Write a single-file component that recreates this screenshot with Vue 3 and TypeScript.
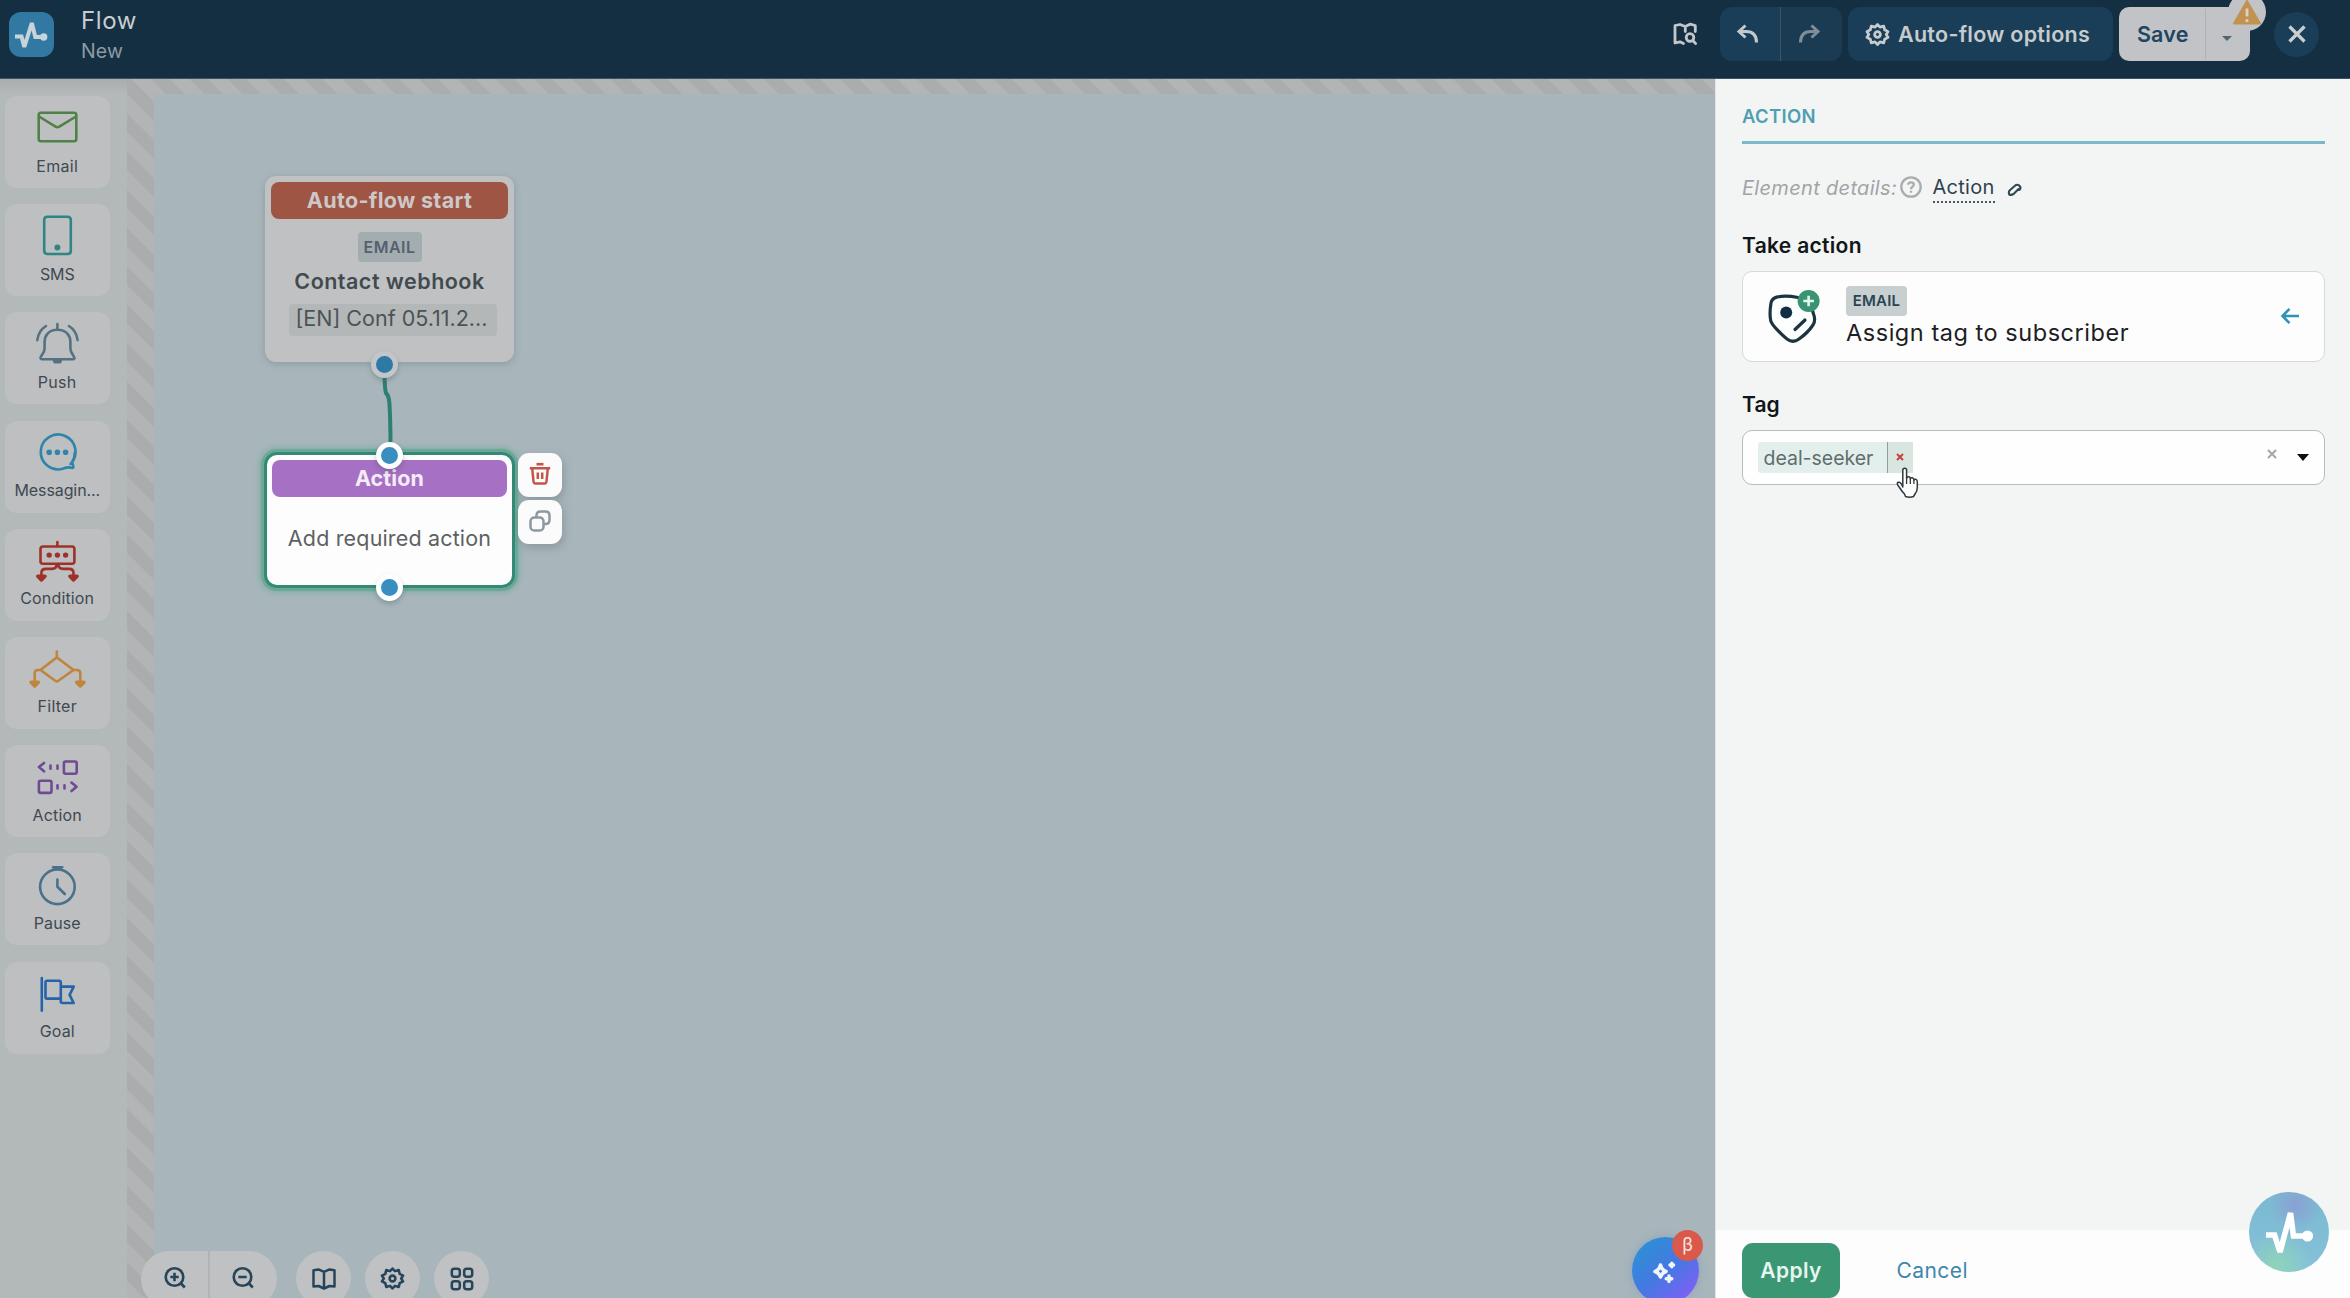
<script setup lang="ts">
interface Shape {
  d: string
  fill?: boolean
}
interface Tool {
  label: string
  color: string
  spacing: string
  shapes: Shape[]
}

const dot = (x: number, y: number, r: number): string =>
  `M${x - r} ${y}a${r} ${r} 0 1 0 ${2 * r} 0a${r} ${r} 0 1 0 ${-2 * r} 0z`
const arrow = (x: number, y: number): string =>
  `M${x - 5.4} ${y}q0 -1.6 2 -1.6h6.8q2 0 2 1.6q0 1 -1 2l-3.2 3.2q-1.2 1 -2.4 0l-3.2 -3.2q-1 -1 -1 -2z`

const tools: Tool[] = [
  {
    label: 'Email', color: '#4f8248', spacing: '0.3px',
    shapes: [{ d: 'M14 8.7H47Q49.3 8.7 49.3 11V35Q49.3 37.3 47 37.3H14Q11.7 37.3 11.7 35V11Q11.7 8.7 14 8.7z' }, { d: 'M12 12.5L28.5 22.6Q30.4 23.8 32.3 22.6L49 12.5' }],
  },
  {
    label: 'SMS', color: '#2f8583', spacing: '-0.15px',
    shapes: [{ d: 'M20.5 4.7H40.5Q43.8 4.7 43.8 8V38.7Q43.8 42 40.5 42H20.5Q17.2 42 17.2 38.7V8Q17.2 4.7 20.5 4.7z' }, { d: dot(30.4, 35.6, 3), fill: true }],
  },
  {
    label: 'Push', color: '#557282', spacing: '0.3px',
    shapes: [
      { d: 'M30.4 4V9.5M30.4 9.8C22 9.8 17.6 15.5 17.6 22V28.5C17.6 32.8 14.2 35.2 13.6 37.5Q13.2 39.2 15 39.2H46Q47.8 39.2 47.3 37.5C46.6 35.2 43.4 32.8 43.4 28.5V22C43.4 15.500 39 9.8 30.4 9.8zM10.300 20.2C11 14 14 9 19 6M50.600 20.200C49.900 14 46.900 9 41.900 6' },
      { d: 'M25.800 39.500H35V40.500Q35 43.600 32 43.600H28.800Q25.800 43.600 25.800 40.500z', fill: true },
    ],
  },
  {
    label: 'Messagin...', color: '#2f84aa', spacing: '-0.1px',
    shapes: [
      { d: 'M43.5 35.200A17.400 17.400 0 1 0 36.500 39.500Q41 37.600 45.500 38.900Q46.800 38.800 46.300 37.300L45.200 33Q47.900 28.500 47.800 23.500' },
      { d: dot(22.2, 23.2, 2.8) + dot(30.4, 23.2, 2.8) + dot(38.600, 23.2, 2.8), fill: true },
    ],
  },
  {
    label: 'Condition', color: '#9e3229', spacing: '0.15px',
    shapes: [
      { d: 'M30.4 5V9.300M16 9.500H45Q47.400 9.500 47.400 12V24.200Q47.400 26.700 45 26.700H16Q13.500 26.700 13.500 24.200V12Q13.500 9.500 16 9.500zM29.600 27Q29.600 31.900 25 31.900H19Q14.400 31.900 14.400 36V38M31.400 27Q31.400 31.900 36 31.900H42Q46.500 31.900 46.500 36V38' },
      { d: dot(22.2, 18.1, 2.7) + dot(30.4, 18.1, 2.7) + dot(38.6, 18.1, 2.7) + arrow(14.4, 39) + arrow(46.5, 39), fill: true },
    ],
  },
  {
    label: 'Filter', color: '#bf853c', spacing: '0.25px',
    shapes: [
      { d: 'M29.800 6.500V12.500M28.600 13.300Q29.800 12.400 31 13.300L46.500 25L31 36Q29.800 36.900 28.600 36L13.500 25zM13.500 25H11Q7.700 25 7.700 28.300V35M46.500 25H50Q53.300 25 53.300 28.300V35' },
      { d: arrow(7.7, 37) + arrow(53.3, 37), fill: true },
    ],
  },
  {
    label: 'Action', color: '#6f4b93', spacing: '0.2px',
    shapes: [{ d: 'M17 10L12 14.100L17 18.300M23.500 12.500V15.800M30.500 12.500V15.800M38.500 8.500H48Q49.700 8.500 49.700 10.200V19Q49.700 20.700 48 20.700H38.500Q36.900 20.700 36.900 19V10.200Q36.900 8.500 38.500 8.500zM13.500 27.700H22.800Q24.500 27.700 24.500 29.400V38.200Q24.500 39.900 22.800 39.900H13.500Q11.900 39.900 11.900 38.200V29.400Q11.900 27.700 13.500 27.700zM30.500 32.200V35.500M37.500 32.200V35.500M44.500 29.600L49.500 33.800L44.500 38' }],
  },
  {
    label: 'Pause', color: '#49718b', spacing: '0.15px',
    shapes: [{ d: dot(30.4, 25.8, 17.3) + 'M26 6.300H35.300M30.400 18.500V25.800L37.800 33' }],
  },
  {
    label: 'Goal', color: '#2763a8', spacing: '0.1px',
    shapes: [{ d: 'M14.800 8V40.800M20 10.700H32Q33.800 10.700 33.800 12.500V28.600H20Q18.500 28.600 18.500 27V12.500Q18.500 10.700 20 10.700zM33.800 16.600H46.700L42.600 24.800L46.700 33H35.500Q33.800 33 33.800 31.500V28.600' }],
  },
]

const gear =
  'M12 1.600L14.600 4.300L18.500 3.200L19.500 7.100L23 9L21.100 12L23 15L19.500 16.900L18.500 20.800L14.600 19.700L12 22.400L9.400 19.700L5.500 20.800L4.500 16.900L1 15L2.900 12L1 9L4.500 7.100L5.500 3.200L9.400 4.300z'
</script>

<template>
  <div class="app">
    <header class="topbar">
      <div class="logo">
        <svg viewBox="0 0 45 45" width="45" height="45">
          <path d="M6 24.500H12.500L15.300 35L22.800 11L26.300 25H35" fill="none" stroke="#c9d3da" stroke-width="4" stroke-linejoin="miter" stroke-miterlimit="2" />
          <circle cx="34.700" cy="25" r="3.700" fill="#c9d3da" />
        </svg>
      </div>
      <div class="titles">
        <div class="title">Flow</div>
        <div class="subtitle">New</div>
      </div>
      <div class="actions">
        <svg class="guide" viewBox="0 0 24 24" width="24" height="24" fill="none" stroke="#c3c7ca" stroke-width="2.800" stroke-linejoin="round" stroke-linecap="round">
          <path d="M10.500 21.500L7 19.800L2 21V3.500L7 2.500L12.300 4.500L17 2.200L22.300 3.500V9.500M12.300 4.500V9.500" />
          <circle cx="17" cy="15.500" r="3.800" />
          <path d="M20 18.700L22.700 21.600" />
        </svg>
        <div class="history">
          <button class="hbtn" aria-label="undo">
            <svg viewBox="0 0 22 20" width="22" height="20" fill="none" stroke="#c3c9cd" stroke-width="3"><path d="M8.500 1.500L2 7.500L8.500 13.500M2.500 7.500H9Q19.500 7.500 19.500 18.500" /></svg>
          </button>
          <button class="hbtn redo" aria-label="redo">
            <svg viewBox="0 0 22 20" width="22" height="20" fill="none" stroke="#7f8f9a" stroke-width="3"><path d="M13.500 1.500L20 7.500L13.500 13.500M19.500 7.500H13Q2.500 7.500 2.500 18.500" /></svg>
          </button>
        </div>
        <button class="options">
          <svg viewBox="0 0 24 24" width="23" height="23" fill="none" stroke="#c6cbce" stroke-width="2.900" stroke-linejoin="round"><path :d="gear" /><circle cx="12" cy="12" r="3" /></svg>
          <span>Auto-flow options</span>
        </button>
        <div class="save">
          <span class="save-label">Save</span>
          <span class="save-more"><i class="caret"></i></span>
          <span class="warn">
            <svg viewBox="0 0 30 28" width="30" height="28"><path d="M15 3L28 25.500H2z" fill="#c39150" stroke="#c39150" stroke-width="2" stroke-linejoin="round" /><path d="M15 10.500V18.500M15 21.300V24" stroke="#d8d3cc" stroke-width="2.800" /></svg>
          </span>
        </div>
        <button class="close" aria-label="close">
          <svg viewBox="0 0 20 20" width="20" height="20"><path d="M2.500 2.500L17.500 17.500M17.500 2.500L2.500 17.500" stroke="#c9ced1" stroke-width="3.200" /></svg>
        </button>
      </div>
    </header>

    <div class="body">
      <aside class="sidebar">
        <div v-for="t in tools" :key="t.label" class="tool">
          <svg viewBox="0 0 60 44" width="60" height="44" stroke-width="2.600" stroke-linecap="round" stroke-linejoin="round">
            <path v-for="(s, i) in t.shapes" :key="i" :d="s.d" :fill="s.fill ? t.color : 'none'" :stroke="s.fill ? 'none' : t.color" />
          </svg>
          <span :style="{ letterSpacing: t.spacing }">{{ t.label }}</span>
        </div>
      </aside>

      <main class="stage">
        <div class="canvas">
          <svg class="link" viewBox="0 0 20 80" width="20" height="80" fill="none"><path d="M5.500 0Q5.500 20 7 24Q10 27 10.400 34Q11.500 50 11.500 80" stroke="#2d7f73" stroke-width="4" /></svg>

          <section class="node start">
            <div class="node-head red">Auto-flow start</div>
            <span class="badge">EMAIL</span>
            <div class="node-name">Contact webhook</div>
            <div class="node-chip">[EN] Conf 05.11.2...</div>
            <i class="port out-dim"></i>
          </section>

          <section class="node action">
            <div class="node-head purple">Action</div>
            <div class="node-text">Add required action</div>
            <i class="port top"></i>
            <i class="port bottom"></i>
          </section>

          <div class="node-tools">
            <button aria-label="delete">
              <svg viewBox="0 0 22 22" width="22" height="22" fill="none" stroke="#c4534a" stroke-width="2.500" stroke-linejoin="round"><path d="M7.500 1.200H14.500" stroke-width="2.600" /><path d="M.8 5.200H21.200M3.200 5.500L4.500 18.500Q4.700 20.500 6.500 20.500H15.500Q17.300 20.500 17.500 18.500L18.800 5.500M8.800 9.500V16M13.200 9.500V16" /></svg>
            </button>
            <button aria-label="copy">
              <svg viewBox="0 0 22 22" width="22" height="22" fill="none" stroke="#8b9a9f" stroke-width="2.500"><rect x="1.500" y="7.500" width="13" height="13" rx="3.800" /><path d="M7.500 7V5.500Q7.500 1.500 11.500 1.500H16.500Q20.500 1.500 20.500 5.500V10Q20.500 14 16.500 14H15" /></svg>
            </button>
          </div>
        </div>

        <div class="dock">
          <div class="zoom">
            <span>
              <svg viewBox="0 0 22 22" width="22" height="22" fill="none" stroke="#27455a" stroke-width="2.600"><circle cx="10.500" cy="10" r="8.800" /><path d="M17 16.500L20.800 20.500M6.300 10H14.700M10.500 5.800V14.200" /></svg>
            </span>
            <span>
              <svg viewBox="0 0 22 22" width="22" height="22" fill="none" stroke="#27455a" stroke-width="2.600"><circle cx="10.500" cy="10" r="8.800" /><path d="M17 16.500L20.800 20.500M6.300 10H14.700" /></svg>
            </span>
          </div>
          <div class="round">
            <svg viewBox="0 0 24 22" width="24" height="22" fill="none" stroke="#27455a" stroke-width="2.500" stroke-linejoin="round"><path d="M1.500 2.200L6.500 1.400L12 3.800L17.500 1.400L22.500 2.200V18.600L17.500 18L12 20.500L6.500 18L1.500 18.600zM12 3.800V20" /></svg>
          </div>
          <div class="round">
            <svg viewBox="0 0 24 24" width="23" height="23" fill="none" stroke="#27455a" stroke-width="2.700" stroke-linejoin="round"><path :d="gear" /><circle cx="12" cy="12" r="3" /></svg>
          </div>
          <div class="round">
            <svg viewBox="0 0 24 24" width="24" height="24" fill="none" stroke="#27455a" stroke-width="2.500"><rect x="1.800" y="1.800" width="8" height="8" rx="2.500" /><rect x="14.200" y="1.800" width="8" height="8" rx="2.500" /><rect x="1.800" y="14.200" width="8" height="8" rx="2.500" /><rect x="14.200" y="14.200" width="8" height="8" rx="2.500" /></svg>
          </div>
        </div>

        <div class="assistant">
          <svg viewBox="0 0 24 24" width="24" height="24">
            <path d="M8.500 6Q9.800 11.200 14 12.500Q9.800 13.800 8.500 18Q7.200 13.800 3 12.500Q7.200 11.200 8.500 6z" fill="none" stroke="#f1f5fb" stroke-width="3.600" stroke-linejoin="round" />
            <path d="M19.800 4.200V7.800M18 6H21.600M17 17V22.600M14.200 19.800H19.800" stroke="#f1f5fb" stroke-width="3.400" stroke-linecap="round" />
          </svg>
          <span class="beta">β</span>
        </div>
      </main>

      <aside class="panel">
        <div class="panel-body">
          <h2>ACTION</h2>
          <div class="details">
            <em>Element details:</em>
            <svg class="help" viewBox="0 0 22 22" width="22" height="22" fill="none" stroke="#a9adae" stroke-width="2.300"><circle cx="11" cy="11" r="9.700" /><path d="M8.200 8.800Q8.200 6.300 11 6.300Q13.800 6.300 13.800 8.600Q13.800 10 12.200 10.900Q11 11.600 11 13.200M11 14.800V16.800" /></svg>
            <span class="details-name">Action</span>
            <svg class="pen" viewBox="0 0 16 16" width="15" height="15" fill="none" stroke="#33474f" stroke-width="2.200" stroke-linejoin="round"><path d="M2.500 13.500Q1.200 10.300 3 8.700L8.500 4Q10.500 2.200 12.800 3.600Q15.300 5.500 13.800 8Q12.500 9.200 12.300 7.500L7 12.700Q5 14.200 2.500 13.500z" /></svg>
          </div>

          <h3>Take action</h3>
          <div class="pick">
            <svg class="pick-icon" viewBox="0 0 54 56" width="54" height="56">
              <path d="M31 6.500C22 4.800 14 5.200 10.500 5.900Q5 7 4 12C3 18 3 26 3.700 29.500C4.500 34 15 44 20 48Q26 52.500 32 48C37 44.500 43 38.500 46 34Q49 29 46.500 23L45.500 19.500" fill="#fdfefe" stroke="#1c3440" stroke-width="3.200" stroke-linecap="round" stroke-linejoin="round" />
              <path d="M28 38.500L38 29" stroke="#1c3440" stroke-width="3.200" stroke-linecap="round" />
              <circle cx="19.200" cy="21.500" r="6" fill="#132d42" />
              <circle cx="41.600" cy="10" r="11" fill="#389472" />
              <path d="M41.600 4.700V15.300M36.300 10H46.900" stroke="#e4f5ee" stroke-width="2.600" />
            </svg>
            <div class="pick-text">
              <span class="badge small">EMAIL</span>
              <div class="pick-name">Assign tag to subscriber</div>
            </div>
            <svg class="back" viewBox="0 0 20 18" width="20" height="18" fill="none" stroke="#2c94b8" stroke-width="2.600"><path d="M9.500 1.800L2.500 9L9.500 16.200M2.500 9H19" /></svg>
          </div>

          <h3 class="tag-title">Tag</h3>
          <div class="select">
            <div class="tag">
              <span class="tag-text">deal-seeker</span>
              <span class="tag-x"><svg viewBox="0 0 8 8" width="8" height="8"><path d="M1 1L7 7M7 1L1 7" stroke="#c8433f" stroke-width="2" /></svg></span>
            </div>
            <svg class="clear" viewBox="0 0 10 10" width="10" height="10"><path d="M1 1L9 9M9 1L1 9" stroke="#a3a7a8" stroke-width="2" /></svg>
            <i class="drop"></i>
            <svg class="hand" viewBox="0 0 24 32" width="24" height="32"><path d="M6.800 20V3.300Q6.800 1.200 8.700 1.200Q10.600 1.200 10.600 3.300V11.500Q10.900 9.800 12.500 9.800Q14.300 9.800 14.300 11.800Q14.700 10.500 16.200 10.700Q17.800 10.900 17.900 13Q18.400 12 19.700 12.300Q21.400 12.700 21.300 15V20.500Q21.300 24 19.300 26.500L17.500 29.500Q13.500 31 9.500 29.500L8.500 27Q6 24.500 3.500 20.500L1.600 17.800Q.8 16 2.300 15.300Q3.800 14.700 5 16.500z" fill="#fff" stroke="#30393c" stroke-width="1.500" stroke-linejoin="round" /><path d="M10.600 11.500V17M14.300 12V17M17.900 13V17" stroke="#30393c" stroke-width="1.300" /></svg>
          </div>
        </div>
        <footer class="panel-foot">
          <button class="apply">Apply</button>
          <span class="cancel">Cancel</span>
        </footer>
        <div class="pulse">
          <svg viewBox="0 0 80 80" width="80" height="80">
            <path d="M17 43H25.500L31 60L41.500 21L44.500 44H58" fill="none" stroke="#fff" stroke-width="5.600" stroke-linejoin="miter" stroke-miterlimit="2" />
            <circle cx="58.500" cy="44" r="5.600" fill="#fff" />
          </svg>
        </div>
      </aside>
    </div>
  </div>
</template>

<style>
body { margin: 0; overflow: hidden; }
</style>

<style scoped>
.app {
  height: 100vh;
  display: flex;
  flex-direction: column;
  overflow: hidden;
  font-family: Inter, "Liberation Sans", sans-serif;
  background: #a8b6bb;
}
svg { display: block; flex: none; overflow: visible; }
button { border: 0; padding: 0; margin: 0; font: inherit; background: none; }

.topbar {
  flex: none;
  box-sizing: border-box;
  height: 79px;
  display: flex;
  align-items: flex-start;
  padding-left: 9px;
  background: #152f42;
  border-bottom: 1px solid #3e5361;
}
.logo {
  width: 44.500px;
  height: 45px;
  margin-top: 12px;
  border-radius: 12px;
  background: #3179a3;
}
.titles { margin: 4.500px 0 0 27.500px; }
.title, .subtitle { height: 31px; line-height: 31px; }
.title { font-size: 24px; letter-spacing: 0.600px; color: #c8cdd0; }
.subtitle { font-size: 19.500px; letter-spacing: 0.100px; color: #8d9aa4; }
.actions {
  margin-left: auto;
  padding: 7px 31px 0 0;
  height: 54px;
  display: flex;
  align-items: center;
}
.guide { margin-right: 23px; margin-top: -1px; }
.history {
  width: 122px;
  height: 54px;
  display: flex;
  border-radius: 12px;
  overflow: hidden;
  background: #1a3e58;
  margin-right: 6px;
}
.hbtn { flex: 1; display: flex; align-items: center; justify-content: center; padding-right: 3px; }
.redo { border-left: 1px solid #3b566a; background: #1b3b53; padding: 0 5px 0 0; }
.options {
  width: 265px;
  height: 54px;
  display: flex;
  align-items: center;
  padding-left: 18px;
  border-radius: 12px;
  background: #1a3e58;
  color: #c6cbce;
  font-size: 21.500px;
  font-weight: 600;
  letter-spacing: 0.280px;
  white-space: nowrap;
  margin-right: 6px;
}
.options span { margin-left: 9px; }
.save {
  position: relative;
  width: 131px;
  height: 54px;
  display: flex;
  align-items: center;
  border-radius: 10px;
  background: #c1c3c6;
  color: #1f4560;
  font-size: 21.500px;
  font-weight: 600;
  letter-spacing: 0.150px;
  margin-right: 24px;
}
.save-label { width: 86px; text-align: center; text-indent: 1.500px; }
.save-more {
  box-sizing: border-box;
  flex: 1;
  height: 50px;
  border-left: 1px solid #abb0b4;
  display: flex;
  align-items: center;
  justify-content: center;
  padding: 8px 2px 0 0;
}
.caret { border: 5px solid transparent; border-top-color: #526672; border-bottom: 0; }
.warn {
  position: absolute;
  right: -16px;
  top: -14px;
  width: 38px;
  height: 38px;
  border-radius: 50%;
  background: #c1c3c6;
  display: flex;
  align-items: center;
  justify-content: center;
}
.close {
  width: 45px;
  height: 45px;
  border-radius: 50%;
  background: #1a3e58;
  display: flex;
  align-items: center;
  justify-content: center;
}

.body { flex: 1; min-height: 0; display: flex; }
.sidebar {
  flex: none;
  box-sizing: border-box;
  width: 127px;
  padding: 17px 0 0 5px;
  display: flex;
  flex-direction: column;
  gap: 16.200px;
  background: linear-gradient(#a9adaf, #b3b8b9 14px);
}
.tool {
  box-sizing: border-box;
  flex: none;
  width: 104.500px;
  height: 92px;
  padding-top: 8px;
  display: flex;
  flex-direction: column;
  align-items: center;
  border-radius: 12px;
  background: #bdbfc1;
}
.tool span { margin-top: 7.500px; font-size: 16px; line-height: 20px; color: #3f4951; }

.stage {
  position: relative;
  flex: 1;
  min-width: 0;
  display: flex;
  padding: 15px 0 0 27px;
  background: linear-gradient(45deg, #abacae 25%, #b3b4b6 25% 50%, #abacae 50% 75%, #b3b4b6 75%) 0 15px / 38.300px 38.300px;
}
.canvas { position: relative; flex: 1; background: #a8b6bb; }

.node {
  position: absolute;
  box-sizing: border-box;
  display: flex;
  flex-direction: column;
  align-items: center;
  border-radius: 11px;
  white-space: nowrap;
}
.start {
  left: 111px;
  top: 82px;
  width: 249px;
  height: 186px;
  padding: 6px;
  background: #bfc1c3;
  box-shadow: 0 2px 7px rgba(70, 90, 96, 0.28);
}
.node-head {
  align-self: stretch;
  height: 37px;
  line-height: 37px;
  text-align: center;
  border-radius: 8px;
  font-size: 21.500px;
  font-weight: 650;
}
.red { background: #9f5543; color: #cdc8c8; letter-spacing: 0.320px; }
.badge {
  box-sizing: border-box;
  width: 64px;
  height: 30px;
  line-height: 30px;
  margin-top: 13px;
  text-align: center;
  border-radius: 4px;
  background: #a3adb0;
  color: #56606f;
  font-size: 16px;
  font-weight: 600;
  letter-spacing: 0.500px;
}
.node-name {
  margin-top: 5px;
  font-size: 21.500px;
  line-height: 28px;
  font-weight: 600;
  letter-spacing: 0.480px;
  color: #414b4f;
}
.node-chip {
  width: 208px;
  height: 32px;
  line-height: 29px;
  margin: 9px 0 0 7px;
  text-indent: 6.500px;
  border-radius: 4px;
  background: #b4b7b8;
  font-size: 21.500px;
  color: #4b5356;
}
.port {
  position: absolute;
  box-sizing: border-box;
  width: 27px;
  height: 27px;
  border: 5.200px solid #fdfeff;
  border-radius: 50%;
  background: #3a8dbf;
  box-shadow: 0 3px 5px rgba(60, 80, 86, 0.3);
}
.out-dim { left: 105.500px; bottom: -16px; border-color: #c2c6c9; background: #2f7aa5; }
.action {
  left: 110px;
  top: 358px;
  width: 251px;
  height: 136px;
  padding: 4.500px 5px;
  border: 3px solid #348a77;
  border-radius: 13px;
  background: #fdfdfe;
  box-shadow: 0 0 0 3px #6ba898, 0 0 7px 3px #6ba898;
}
.action .node-head { margin: 0; }
.purple { background: #a670c4; color: #f4ecf8; letter-spacing: 0.120px; }
.node-text {
  margin-top: 27px;
  line-height: 28px;
  font-size: 21.500px;
  letter-spacing: 0.160px;
  color: #5d6162;
}
.top { left: 109px; top: -13.500px; }
.bottom { left: 109px; bottom: -15.500px; }
.link { position: absolute; left: 224.500px; top: 275px; }
.node-tools {
  position: absolute;
  left: 363.500px;
  top: 359px;
  display: flex;
  flex-direction: column;
  gap: 3px;
}
.node-tools button {
  width: 44px;
  height: 44px;
  display: flex;
  align-items: center;
  justify-content: center;
  border-radius: 11px;
  background: #fbfbfc;
  box-shadow: 2px 4px 8px rgba(60, 76, 82, 0.25);
}
.node-tools svg { margin-top: -3px; }

.dock {
  position: absolute;
  left: 14px;
  top: 1172px;
  display: flex;
}
.zoom { width: 136px; height: 56px; display: flex; border-radius: 28px; background: #bfc1c3; margin-right: 19px; }
.zoom span { flex: 1; display: flex; align-items: center; justify-content: center; padding: 0 0 2px 1px; }
.zoom span + span { border-left: 2px solid #b1b4b7; padding-right: 1px; }
.round {
  width: 55px;
  height: 55px;
  margin-right: 14px;
  border-radius: 50%;
  background: #bfc1c3;
  display: flex;
  align-items: center;
  justify-content: center;
}
.assistant {
  position: absolute;
  left: 1505px;
  top: 1158px;
  width: 67px;
  height: 67px;
  border-radius: 50%;
  background: linear-gradient(140deg, #2f8ed6 15%, #4478e2 50%, #7a62f5 85%);
  box-shadow: 0 0 8px rgba(90, 120, 200, 0.35);
  display: flex;
  align-items: center;
  justify-content: center;
}
.assistant svg { margin: 0 3px 0 0; }
.beta {
  position: absolute;
  right: -4px;
  top: -7px;
  width: 31px;
  height: 31px;
  line-height: 29px;
  border-radius: 50%;
  background: #d9594b;
  color: #f7e6e4;
  font-size: 18px;
  text-align: center;
}

.panel {
  position: relative;
  flex: none;
  box-sizing: border-box;
  width: 635px;
  display: flex;
  flex-direction: column;
  background: #f3f5f5;
  border-left: 1px solid #dfe5e8;
}
.panel-body { flex: 1; padding: 24px 25px 0 26px; }
h2 {
  margin: 0;
  height: 38px;
  line-height: 26px;
  border-bottom: 3px solid #79b9c9;
  font-size: 18.500px;
  font-weight: 600;
  letter-spacing: 0.320px;
  color: #4f9fb2;
}
.details { display: flex; align-items: center; height: 30px; margin-top: 28.500px; font-size: 20px; }
.details em { color: #a0a4a5; letter-spacing: 0.320px; width: 158px; white-space: nowrap; }
.help { margin-top: -2px; }
.details-name {
  margin-left: 10.500px;
  height: 28px;
  line-height: 29px;
  border-bottom: 2px dotted #46575f;
  color: #2f434e;
  letter-spacing: 0.280px;
}
.pen { margin-left: 12px; margin-top: 4px; }
h3 {
  margin: 28.500px 0 0;
  font-size: 21px;
  line-height: 30px;
  font-weight: 600;
  letter-spacing: 0.310px;
  color: #121618;
}
.pick {
  box-sizing: border-box;
  height: 91px;
  margin-top: 10px;
  padding: 14px 24px 0;
  display: flex;
  align-items: flex-start;
  border: 1px solid #d5d9d9;
  border-radius: 10px;
  background: #fdfdfe;
}
.pick-icon { margin-top: 5px; }
.pick-text { margin-left: 25px; flex: 1; }
.badge.small {
  display: block;
  width: 61px;
  margin: 0;
  background: #c7cfd1;
  color: #2b4453;
  font-size: 15px;
  letter-spacing: 0.180px;
}
.pick-name { font-size: 23.500px; line-height: 32px; letter-spacing: 0.540px; color: #1c2022; margin-top: 0.500px; }
.back { margin: 21px 0 0; }
.tag-title { margin-top: 27.500px; letter-spacing: 0.050px; }
.select {
  position: relative;
  box-sizing: border-box;
  height: 55px;
  margin-top: 10.500px;
  padding: 0 14px 0 14.500px;
  display: flex;
  align-items: center;
  border: 1px solid #b7bcbc;
  border-radius: 10px;
  background: #fdfefd;
}
.tag { display: flex; height: 31px; width: 155px; margin-top: -1px; background: #e3efec; border-radius: 3px; }
.tag-text {
  width: 129px;
  box-sizing: border-box;
  padding-left: 6px;
  line-height: 32px;
  font-size: 19.500px;
  letter-spacing: -0.020px;
  color: #5f6d6c;
}
.tag-x {
  flex: 1;
  display: flex;
  align-items: center;
  justify-content: center;
  border-left: 1px solid #8fa09c;
  background: #d9e6e0;
}
.clear { margin-left: auto; margin-top: -7px; }
.drop {
  margin: 0 1px 0 20px;
  border: 6px solid transparent;
  border-top: 7px solid #0c0e0f;
  border-bottom: 0;
}
.hand { position: absolute; left: 153px; top: 36px; }

.panel-foot {
  flex: none;
  box-sizing: border-box;
  height: 68px;
  padding: 13px 0 0 26px;
  display: flex;
  background: #fdfdfd;
  font-size: 21px;
  line-height: 55px;
}
.apply {
  width: 98px;
  height: 55px;
  border-radius: 11px;
  background: #3b9674;
  color: #e6f6ef;
  font-weight: 600;
  letter-spacing: 0.390px;
}
.cancel { margin-left: 56.500px; color: #3f86ac; letter-spacing: 0.440px; }
.pulse {
  position: absolute;
  right: 21px;
  bottom: 26px;
  width: 80px;
  height: 80px;
  border-radius: 50%;
  background:
    radial-gradient(circle at 58% 16%, rgba(140, 158, 212, 0.95) 0, rgba(140, 158, 212, 0) 32%),
    radial-gradient(circle at 35% 92%, rgba(142, 212, 184, 1) 0, rgba(142, 212, 184, 0) 38%),
    linear-gradient(#7ab9d0, #86c2da);
}
</style>
